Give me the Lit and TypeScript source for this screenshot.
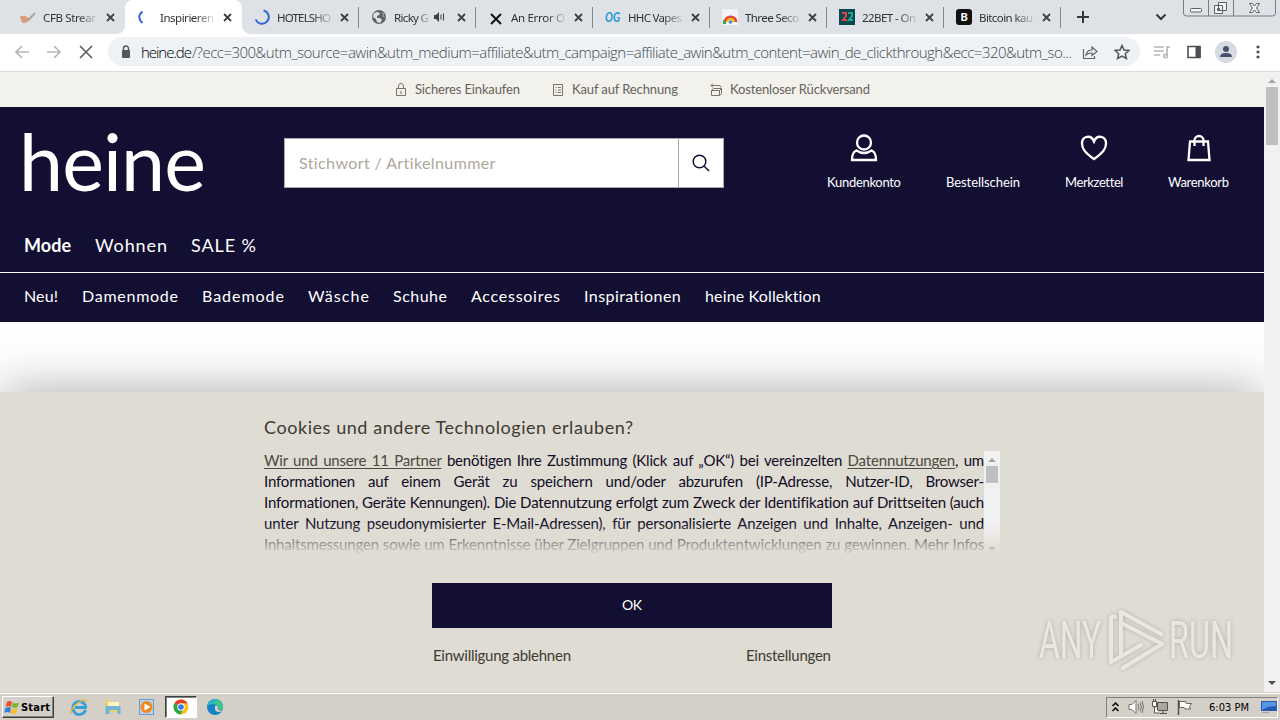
import {html, svg, css, LitElement, TemplateResult} from 'lit';
import {customElement, property} from 'lit/decorators.js';
import {classMap} from 'lit/directives/class-map.js';

// One line of text, tracked so that it fills the given width.
@customElement('fit-text')
export class FitText extends LitElement {
  static styles = css`
    :host {
      display: block;
      flex: none;
      white-space: pre;
    }
    span {
      display: inline-block;
    }
  `;

  @property() text = '';
  @property({type: Number}) width = 0;

  render() {
    return html`<span>${this.text}</span>`;
  }

  updated() {
    const span = this.renderRoot.querySelector('span')!;
    span.style.letterSpacing = '0';
    const natural = span.getBoundingClientRect().width;
    span.style.letterSpacing = `${(this.width - natural) / Math.max(1, this.text.length - 1)}px`;
    this.style.width = `${this.width}px`;
  }
}

const cross = svg`<path d="M1 1l7 7M8 1l-7 7" fill="none" stroke="#3c4043" stroke-width="1.8"/>`;

const favicons: Record<string, TemplateResult> = {
  pipe: svg`<path d="M0 7h6l1 2q2-1 2 1-1 4-5 4-3 0-3-3z" fill="#dc9d78"/><path d="M6.500 9l2 2 6.500-7" stroke="#b5a397" stroke-width="2" fill="none"/>`,
  spin: svg`<path d="M5.500 2.500Q-1 8 5.500 14" fill="none" stroke="#3367d6" stroke-width="2"/>`,
  spin2: svg`<path d="M9.500 1.500A6.700 6.700 0 1 1 1.800 10.500" fill="none" stroke="#3367d6" stroke-width="2"/>`,
  globe: svg`<circle cx="8" cy="8" r="7" fill="#5f6368"/><path d="M3 4l3-1 3 1-1 2-2 1v2l3 0 2 2-2 3-3-1-1-3-3-2zM11 3l2 2-1 2 2 2" fill="#dee1e6"/>`,
  x: svg`<path d="M3 5l10 10M13 5L3 15" stroke="#111" stroke-width="2"/>`,
  og: svg`<text x="0" y="13" font-family="Lato" font-size="13" font-weight="900" font-style="italic" textLength="15" lengthAdjust="spacingAndGlyphs" fill="#2c9bd6">OG</text>`,
  rainbow: svg`<rect width="16" height="16" fill="#f1f3f4"/><path d="M3 13a5.500 5 0 0 1 11 0" fill="none" stroke="#e8453c" stroke-width="3"/><path d="M5.500 13a3 3 0 0 1 6 0" fill="none" stroke="#fbbc05" stroke-width="2"/><circle cx="8.500" cy="13" r="1.800" fill="#4285f4"/><path d="M2 11v3h2" stroke="#34a853" stroke-width="2" fill="none"/>`,
  bet: svg`<rect width="16" height="16" fill="#0a4650"/><path d="M3 4h4v3L4 11h4" fill="none" stroke="#e2453c" stroke-width="2"/><path d="M9 4h4v3l-3 4h4" fill="none" stroke="#21a78f" stroke-width="2"/>`,
  b: svg`<rect width="16" height="16" rx="3" fill="#111"/><text x="4.500" y="12" font-family="Lato" font-size="11" font-weight="900" fill="#fff">B</text>`,
};

const tabs = [
  {icon: 'pipe', title: 'CFB Strear', width: 53},
  {icon: 'spin', title: 'Inspirieren', width: 54, active: true},
  {icon: 'spin2', title: 'HOTELSHO', width: 54},
  {icon: 'globe', title: 'Ricky G', width: 35, audio: true},
  {icon: 'x', title: 'An Error O', width: 54},
  {icon: 'og', title: 'HHC Vapes', width: 54},
  {icon: 'rainbow', title: 'Three Seco', width: 54},
  {icon: 'bet', title: '22BET - On', width: 54},
  {icon: 'b', title: 'Bitcoin kau', width: 54},
];

const perks = [
  {text: 'Sicheres Einkaufen', width: 105, icon: svg`<path d="M1.500 5.500h9v7h-9zM3.500 5.500V3a2.500 2.500 0 0 1 5 0v2.500M6 8v3"/>`},
  {text: 'Kauf auf Rechnung', width: 106, icon: svg`<path d="M1.500 1.500h9v11h-9zM3.500 4.500h1M6 4.500h3M3.500 7h1M6 7h3M3.500 9.500h1M6 9.500h3"/>`},
  {text: 'Kostenloser Rückversand', width: 140, icon: svg`<path d="M1.500 7.500h8v5h-8zM1.500 7.500l2-2h8v5l-2 2M9.500 7.500l2-2M1 2.500h8q2 0 2 2M3 .5l-2 2 2 2"/>`},
];

const account = [
  {text: 'Kundenkonto', width: 74, icon: svg`<circle cx="14" cy="8.500" r="7"/><path d="M6.500 16.500Q2 18 2 26h24q0-8-4.500-9.500-7.500 5-15 0z"/>`},
  {text: 'Bestellschein', width: 74, icon: null},
  {text: 'Merkzettel', width: 58, icon: svg`<path d="M14 25C4 18 2 14 2 9.500 2 2 11 0 14 7.500 17 0 26 2 26 9.500 26 14 24 18 14 25z"/>`},
  {text: 'Warenkorb', width: 61, icon: svg`<path d="M5 7.500h18l1.500 18.500h-21zM9.500 12V6.500a4.500 4.500 0 0 1 9 0V12"/>`},
];

const areas = [['Mode', 47], ['Wohnen', 72], ['SALE %', 65]] as const;

const categories = [
  ['Neu!', 34], ['Damenmode', 96], ['Bademode', 82], ['Wäsche', 61],
  ['Schuhe', 54], ['Accessoires', 89], ['Inspirationen', 97], ['heine Kollektion', 116],
] as const;

@customElement('app-root')
export class AppRoot extends LitElement {
  static styles = css`
    :host {
      display: flex;
      flex-direction: column;
      width: 1280px;
      height: 720px;
      overflow: hidden;
      background: #fff;
      color: #111;
      font-family: Lato, sans-serif;
      --navy: #120f33;
      --sand: #dfdcd3;
    }
    * {
      box-sizing: border-box;
    }
    svg {
      display: block;
      flex: none;
      fill: none;
    }

    /* browser chrome */
    .tabs {
      position: relative;
      display: flex;
      flex: none;
      height: 34px;
      padding-left: 8px;
      background: #dee1e6;
      font: 11.5px 'Noto Sans', sans-serif;
      color: #2f3236;
    }
    .tab {
      position: relative;
      display: flex;
      align-items: center;
      flex: none;
      width: 117px;
      padding: 0 0 0 12px;
    }
    .tab.line {
      border-right: 1px solid #85898f;
      border-image: linear-gradient(transparent 8px, #85898f 8px 27px, transparent 27px) 1;
    }
    .tab.active {
      background: #fff;
      border-radius: 8px 8px 0 0;
    }
    .tab.active::before,
    .tab.active::after {
      content: '';
      position: absolute;
      bottom: 0;
      left: -8px;
      width: 8px;
      height: 8px;
      background: radial-gradient(circle at 0 0, transparent 7.5px, #fff 8px);
    }
    .tab.active::after {
      left: auto;
      right: -8px;
      background: radial-gradient(circle at 100% 0, transparent 7.5px, #fff 8px);
    }
    .title {
      margin: 0 auto 0 7px;
      -webkit-mask-image: linear-gradient(90deg, #000 65%, rgba(0, 0, 0, 0.15));
      mask-image: linear-gradient(90deg, #000 65%, rgba(0, 0, 0, 0.15));
    }
    .audio {
      margin-right: 12px;
    }
    .close {
      margin-right: 10px;
    }
    .line .close {
      margin-right: 9px;
    }
    .plus {
      margin: 11px 0 0 16px;
    }
    .chevron {
      margin: 13px 0 0 66px;
    }
    .caption {
      margin-left: 16px;
    }
    .toolbar {
      display: flex;
      align-items: center;
      flex: none;
      height: 38px;
      padding: 0 14px 2px 14px;
      border-bottom: 1px solid #d7d9dc;
      gap: 16px;
    }
    .address {
      display: flex;
      align-items: center;
      width: 1032px;
      height: 29px;
      margin-left: -2px;
      padding: 0 10px;
      border-radius: 15px;
      background: #eff2f5;
      font: 300 15px 'Open Sans', sans-serif;
      color: #44494f;
    }
    .host {
      margin-left: 7px;
      color: #000;
    }
    .address .share {
      margin: 0 16px 0 10px;
    }
    .tools {
      display: flex;
      align-items: center;
      gap: 16px;
      margin-left: -2px;
    }
    .avatar {
      margin: 0 -3px;
    }

    /* page */
    .viewport {
      display: flex;
      flex: none;
      height: 620px;
    }
    .page {
      display: flex;
      flex-direction: column;
      width: 1264px;
      overflow: hidden;
    }
    .perks {
      display: flex;
      align-items: center;
      flex: none;
      height: 35px;
      padding: 0 0 1px 395px;
      gap: 32px;
      background: #f3f1ec;
      font-size: 13px;
      color: #66625b;
    }
    .perk {
      display: flex;
      align-items: center;
      gap: 8px;
    }
    .perk svg {
      margin-top: 1px;
      stroke: #77736b;
    }
    .header {
      display: flex;
      flex: none;
      height: 110px;
      padding: 0 35px 0 24px;
      background: var(--navy);
      color: #fff;
    }
    .logo {
      height: 110px;
      margin: 0 -2px 0 -5px;
      padding-top: 6px;
      font-size: 79px;
      line-height: 96px;
    }
    .search {
      display: flex;
      align-items: center;
      width: 440px;
      height: 50px;
      margin: 31px 0 0 80px;
      border: 1px solid #aaa7b0;
      background: #fff;
      font-size: 16px;
      color: #aca89c;
    }
    .search fit-text {
      margin: 0 0 2px 14px;
    }
    .search .go {
      display: grid;
      place-items: center;
      width: 45px;
      height: 48px;
      margin-left: auto;
      border-left: 1px solid #aaa7b0;
    }
    .account {
      display: flex;
      gap: 45px;
      margin-left: auto;
      padding-top: 27px;
      font-size: 13px;
    }
    .account > div {
      display: flex;
      flex-direction: column;
      align-items: center;
      gap: 12px;
      line-height: 16px;
    }
    .account svg {
      stroke: #fff;
      stroke-width: 2.3;
    }
    .areas,
    .categories {
      display: flex;
      align-items: center;
      flex: none;
      gap: 24px;
      padding-left: 24px;
      background: var(--navy);
      color: #fff;
    }
    .areas {
      height: 56px;
      border-bottom: 1px solid #fff;
      font-size: 18px;
    }
    .areas .current {
      font-weight: 700;
    }
    .categories {
      height: 49px;
      padding-bottom: 4px;
      font-size: 16px;
    }
    .blank {
      flex: none;
      height: 70px;
    }
    .consent {
      position: relative;
      display: flex;
      flex-direction: column;
      flex: 1;
      padding: 24px 264px 0;
      background: var(--sand);
      box-shadow: 0 0 50px rgba(0, 0, 0, 0.34);
      color: #3d3a33;
    }
    .consent h2 {
      margin: 0;
      font-size: 18px;
      font-weight: 400;
      line-height: 22px;
    }
    .scrollbox {
      position: relative;
      display: flex;
      height: 105px;
      margin-top: 12px;
      color: #100c26;
      font-size: 15px;
      line-height: 21px;
    }
    .scrollbox .scrollbar {
      height: 104px;
      margin-top: 1px;
      padding-bottom: 3px;
    }
    .lines {
      width: 720px;
    }
    .lines div {
      height: 21px;
      white-space: nowrap;
      text-align: justify;
      text-align-last: justify;
      letter-spacing: -0.17px;
    }
    .lines u {
      color: #4c4940;
      text-underline-offset: 2px;
    }
    .fade {
      position: absolute;
      left: 0;
      right: 0;
      bottom: 0;
      height: 32px;
      background: linear-gradient(rgba(223, 220, 211, 0), var(--sand));
    }
    .actions {
      display: flex;
      flex-direction: column;
      align-self: center;
      width: 400px;
      margin-top: 28px;
      font-size: 15px;
    }
    .ok {
      display: grid;
      place-items: center;
      height: 45px;
      padding-bottom: 2px;
      background: var(--navy);
      color: #fff;
      font-size: 14px;
    }
    .links {
      display: flex;
      justify-content: space-between;
      margin-top: 17px;
      padding: 0 1px;
      line-height: 20px;
    }
    .watermark {
      position: absolute;
      right: 23px;
      bottom: 14px;
      overflow: visible;
      filter: drop-shadow(0 0 2px rgba(90, 86, 76, 0.4));
    }
    .scrollbar {
      display: flex;
      flex-direction: column;
      align-items: center;
      justify-content: space-between;
      width: 16px;
      padding: 6px 0;
      background: #f1f1f1;
    }
    .thumb {
      width: 12px;
      margin: 4px 0 auto;
      background: #bfbfbf;
    }
    .thumb.large {
      height: 58px;
    }
    .thumb.small {
      height: 17px;
    }

    /* taskbar */
    .taskbar {
      display: flex;
      align-items: center;
      flex: 1;
      border-top: 1px solid #d4d0c8;
      box-shadow: inset 0 1px #fff;
      padding: 1px 2px 0;
      background: #d4cfc7;
      font: 11px 'DejaVu Sans Condensed', 'DejaVu Sans', sans-serif;
      color: #000;
    }
    .start {
      display: flex;
      align-items: center;
      width: 52px;
      height: 22px;
      padding-left: 1px;
      gap: 1px;
      border: 1px solid;
      border-color: #fff #404040 #404040 #fff;
      box-shadow: inset -1px -1px #808080;
      font-weight: 700;
    }
    .quick {
      display: flex;
      align-items: center;
      margin-left: 9px;
      gap: 2px;
    }
    .app {
      display: grid;
      place-items: center;
      width: 32px;
      height: 22px;
      border: 1px solid transparent;
    }
    .app.open {
      background: #fff;
      border-color: #404040 #fff #fff #404040;
      box-shadow: inset 1px 1px #808080;
    }
    .tray {
      display: flex;
      align-items: center;
      width: 172px;
      height: 21px;
      margin-left: auto;
      padding-left: 5px;
      border: 1px solid;
      border-color: #808080 #fff #fff #808080;
    }
    .tray svg + svg {
      margin-left: 7px;
    }
    .tray fit-text {
      margin: 0 12px 0 15px;
    }
  `;

  render() {
    return html`
      ${this.getTabsHtml()}
      ${this.getToolbarHtml()}
      <div class="viewport">
        <div class="page">
          <div class="perks">
            ${perks.map(perk => html`
              <div class="perk">
                <svg width="12" height="14">${perk.icon}</svg>
                <fit-text .text=${perk.text} .width=${perk.width}></fit-text>
              </div>
            `)}
          </div>
          <div class="header">
            <fit-text class="logo" text="heine" width="187"></fit-text>
            <div class="search">
              <fit-text text="Stichwort / Artikelnummer" width="197"></fit-text>
              <div class="go">
                <svg width="18" height="18" stroke="#120f33" stroke-width="1.500"><circle cx="7.500" cy="7.500" r="6.300"/><path d="M12 12l5 5"/></svg>
              </div>
            </div>
            <div class="account">
              ${account.map(item => html`
                <div>
                  <svg width="28" height="28">${item.icon}</svg>
                  <fit-text .text=${item.text} .width=${item.width}></fit-text>
                </div>
              `)}
            </div>
          </div>
          <div class="areas">
            ${areas.map(([text, width], idx) => html`
              <fit-text class=${classMap({current: idx === 0})} .text=${text} .width=${width}></fit-text>
            `)}
          </div>
          <div class="categories">
            ${categories.map(([text, width]) => html`<fit-text .text=${text} .width=${width}></fit-text>`)}
          </div>
          <div class="blank"></div>
          ${this.getConsentHtml()}
        </div>
        ${this.getScrollbarHtml('large', '#a3a3a3', '#505050')}
      </div>
      ${this.getTaskbarHtml()}
    `;
  }

  getTabsHtml() {
    return html`
      <div class="tabs">
        ${tabs.map((tab, idx) => html`
          <div class=${classMap({tab: true, active: !!tab.active, line: idx > 1})}>
            <svg width="16" height="16">${favicons[tab.icon]}</svg>
            <fit-text class="title" .text=${tab.title} .width=${tab.width}></fit-text>
            ${tab.audio ? html`
              <svg class="audio" width="11" height="10"><path d="M0 3h2l3-3v10L2 7H0z" fill="#3c4043"/><path d="M7 2.500v5M9.500 1.500v7" stroke="#3c4043"/></svg>
            ` : null}
            <svg class="close" width="9" height="9">${cross}</svg>
          </div>
        `)}
        <svg class="plus" width="12" height="12"><path d="M6 0v12M0 6h12" stroke="#33363a" stroke-width="2"/></svg>
        <svg class="chevron" width="12" height="8"><path d="M1.500 1.500L6 6l4.500-4.500" stroke="#33363a" stroke-width="2"/></svg>
        <svg class="caption" width="94" height="18" stroke="#777b82">
          <path d="M.5 0v13q0 3 3 3h86q3 0 3-3V0M25.500 0v16M50.500 0v16" />
          <g fill="#f3f4f6" stroke="#5d6168">
            <rect x="7.500" y="8.500" width="11" height="3.500" rx="1"/>
            <path d="M35.500 2.500h8v8h-8zM31.500 5.500h8v8h-8zM34.500 8.500h2v2h-2z"/>
            <path d="M66.500 3.500h3l2 2.500 2-2.500h3L73.500 8l3 4.500h-3l-2-2.500-2 2.500h-3l3-4.500z"/>
          </g>
        </svg>
      </div>
    `;
  }

  getToolbarHtml() {
    return html`
      <div class="toolbar">
        <svg width="16" height="16" stroke="#b4b6b9" stroke-width="1.700"><path d="M15 8H2M8 2L2 8l6 6"/></svg>
        <svg width="16" height="16" stroke="#b4b6b9" stroke-width="1.700"><path d="M1 8h13M8 2l6 6-6 6"/></svg>
        <svg width="16" height="16" stroke="#5c6064" stroke-width="1.700"><path d="M2 2l12 12M14 2L2 14"/></svg>
        <div class="address">
          <svg width="16" height="16"><rect x="4" y="6" width="8" height="8" rx="1" fill="#54585d"/><path d="M5.500 7V4.500a2.500 2.500 0 0 1 5 0V7" stroke="#54585d" stroke-width="1.500"/></svg>
          <fit-text class="host" text="heine.de" width="51"></fit-text>
          <fit-text text="/?ecc=300&utm_source=awin&utm_medium=affiliate&utm_campaign=affiliate_awin&utm_content=awin_de_clickthrough&ecc=320&utm_so..." width="880"></fit-text>
          <svg class="share" width="16" height="16" stroke="#5f6368" stroke-width="1.200"><path d="M1.500 5v9.500h11V12M4 11q1-5 6-5V3l5 4.500-5 4V9q-4 0-6 2z"/></svg>
          <svg width="16" height="16" stroke="#505459" stroke-width="1.500"><path d="M8 1.500l2 4.500 5 .5-3.700 3.300 1.100 4.700L8 12l-4.400 2.500 1.100-4.700L1 6.500 6 6z"/></svg>
        </div>
        <div class="tools">
          <svg width="16" height="16" stroke="#b4b6b9" stroke-width="1.600"><path d="M0 3h10M0 7h10M0 11h6M13 12V3h3"/><circle cx="11.500" cy="12" r="1.700"/></svg>
          <svg width="16" height="16"><path d="M2 2.500h12v11H2z" stroke="#4a4e53" stroke-width="1.600"/><path d="M9.500 2h5v12h-5z" fill="#4a4e53"/></svg>
          <svg class="avatar" width="22" height="22"><circle cx="11" cy="11" r="11" fill="#d6dae1"/><circle cx="11" cy="8" r="3" fill="#475070"/><path d="M5 16q0-4 6-4t6 4z" fill="#475070"/></svg>
          <svg width="16" height="16"><path d="M8 1.400a1.600 1.600 0 1 1-.01 0zM8 6.400a1.600 1.600 0 1 1-.01 0zM8 11.400a1.600 1.600 0 1 1-.01 0z" fill="#4d5156"/></svg>
        </div>
      </div>
    `;
  }

  getConsentHtml() {
    return html`
      <div class="consent">
        <h2><fit-text text="Cookies und andere Technologien erlauben?" width="369"></fit-text></h2>
        <div class="scrollbox">
          <div class="lines">
            <div><u>Wir und unsere 11 Partner</u> benötigen Ihre Zustimmung (Klick auf „OK“) bei vereinzelten <u>Datennutzungen</u>, um</div>
            <div>Informationen auf einem Gerät zu speichern und/oder abzurufen (IP-Adresse, Nutzer-ID, Browser-</div>
            <div>Informationen, Geräte Kennungen). Die Datennutzung erfolgt zum Zweck der Identifikation auf Drittseiten (auch</div>
            <div>unter Nutzung pseudonymisierter E-Mail-Adressen), für personalisierte Anzeigen und Inhalte, Anzeigen- und</div>
            <div>Inhaltsmessungen sowie um Erkenntnisse über Zielgruppen und Produktentwicklungen zu gewinnen. Mehr Infos</div>
          </div>
          ${this.getScrollbarHtml('small', '#a3a3a3', '#606060')}
          <div class="fade"></div>
        </div>
        <div class="actions">
          <div class="ok"><fit-text text="OK" width="20"></fit-text></div>
          <div class="links">
            <fit-text text="Einwilligung ablehnen" width="138"></fit-text>
            <fit-text text="Einstellungen" width="85"></fit-text>
          </div>
        </div>
        <svg class="watermark" width="208" height="74" viewBox="0 0 208 74">
          <g fill="#f0eee8" opacity=".85" font-family="Roboto" font-size="52">
            <text x="6" y="54" textLength="62" lengthAdjust="spacingAndGlyphs">ANY</text>
            <text x="136" y="54" textLength="64" lengthAdjust="spacingAndGlyphs">RUN</text>
          </g>
          <path d="M82 13q-4-2-4 2v43l30-17M88 50V8l40 22M90 64l39-24-39-20" stroke="#f0eee8" stroke-width="4" stroke-linecap="round" stroke-linejoin="round" opacity=".85"/>
        </svg>
      </div>
    `;
  }

  getScrollbarHtml(size: string, up: string, down: string) {
    return html`
      <div class="scrollbar">
        <svg width="8" height="5"><path d="M0 5l4-4 4 4z" fill=${up}/></svg>
        <div class="thumb ${size}"></div>
        <svg width="8" height="5"><path d="M0 0h8L4 4z" fill=${down}/></svg>
      </div>
    `;
  }

  getTaskbarHtml() {
    return html`
      <div class="taskbar">
        <div class="start">
          <svg width="16" height="16"><path d="M3 3q3-2 5 0L7 8Q4 6 1.500 8z" fill="#e5532d"/><path d="M9 3.500q3 2 6 0L13.500 8q-3 2-5.500 0z" fill="#76b82a"/><path d="M1.500 9q3-2 5.500 0l-1 5q-3-2-6 0z" fill="#3b7fd4"/><path d="M8 9.500q3 1.500 5.500 0L12 14q-3 2-5 0z" fill="#f5bd27"/></svg>
          <fit-text text="Start" width="29"></fit-text>
        </div>
        <div class="quick">
          <div class="app"><svg width="18" height="18"><path d="M15.500 12A6.500 6.500 0 1 1 15.500 8v1.500H5" stroke="#35a0dc" stroke-width="2.800"/><path d="M2 15Q-2 15 6 6.500 16-1 16.500 4" stroke="#e8b83a" stroke-width="1.500"/></svg></div>
          <div class="app"><svg width="18" height="18"><path d="M1.500 2h5l1 2h8v10h-14z" fill="#e9cf74"/><path d="M4 4h11v5H4z" fill="#fff4be"/><path d="M1.500 8h15v8h-3v-4h-8v4h-4z" fill="#72b4d8"/></svg></div>
          <div class="app"><svg width="18" height="18"><rect x="1.500" y="1.500" width="14" height="15" fill="#b6d4ed" stroke="#6b9bc8"/><circle cx="8.500" cy="9" r="6" fill="#f08a1d"/><path d="M6.500 5.500l6 3.500-6 3.500z" fill="#fff"/></svg></div>
          <div class="app open"><svg width="16" height="16"><circle cx="8" cy="8" r="7.500" fill="#fbc116"/><path d="M8 8L1.500 4.250A7.500 7.500 0 0 1 14.500 4.250H8z" fill="#e33b2e"/><path d="M8 8L1.500 4.250A7.500 7.500 0 0 0 7.500 15.500L11 9z" fill="#2da44e"/><circle cx="8" cy="8" r="3.700" fill="#fff"/><circle cx="8" cy="8" r="2.800" fill="#3b78e7"/></svg></div>
          <div class="app"><svg width="18" height="18"><circle cx="9" cy="9" r="8" fill="#1683c9"/><path d="M3 4a8 8 0 0 1 14 6q-1 3-5 2 0-6-5-6-4 0-5.500 1z" fill="#3fc48a"/><path d="M1.500 8a8 8 0 0 1 9-7q-1 4-4 5-3 0-5 2" fill="#28b5cf"/><path d="M9 8q3-1 3 2-1 3 4 2.500-1 1.500-3 1.500-5 0-4-6" fill="#d4cfc7"/></svg></div>
        </div>
        <div class="tray">
          <svg width="7" height="10" stroke="#000" stroke-width="1.500"><path d="M.5 4l3-3 3 3M.5 9l3-3 3 3"/></svg>
          <svg width="18" height="16" stroke="#77736c"><path d="M3 5.500h3l4-4v13l-4-4H3z" fill="#fff"/><path d="M12 5q2 3 0 6M14 3.500q3 4.500 0 9M16 2q3 6 0 12"/></svg>
          <svg width="18" height="16" stroke="#55524c"><path d="M6.500 3.500h10v8h-10zM9 14.500h7M12 12v2" fill="#aaa69e"/><path d="M1.500 2.500h4v5h-4zM2.500 0v2M4.500 0v2M3.500 8v6h5" fill="#fff"/></svg>
          <svg width="18" height="16" stroke="#66625b"><path d="M2.500 1v15" stroke="#55524c" stroke-width="1.500"/><path d="M3.500 2.500h6l1 2h5l-2 3 1 2.500H9l-1-1.500H3.500z" fill="#fff"/></svg>
          <fit-text text="6:03 PM" width="40"></fit-text>
          <svg width="16" height="14"><path d="M0 1h16v10H0z" fill="#245bb0"/><path d="M1 2h14v4Q7 6 1 10z" fill="#5795e4"/><path d="M1 12.500h7" stroke="#8fa5c5"/></svg>
        </div>
      </div>
    `;
  }
}
